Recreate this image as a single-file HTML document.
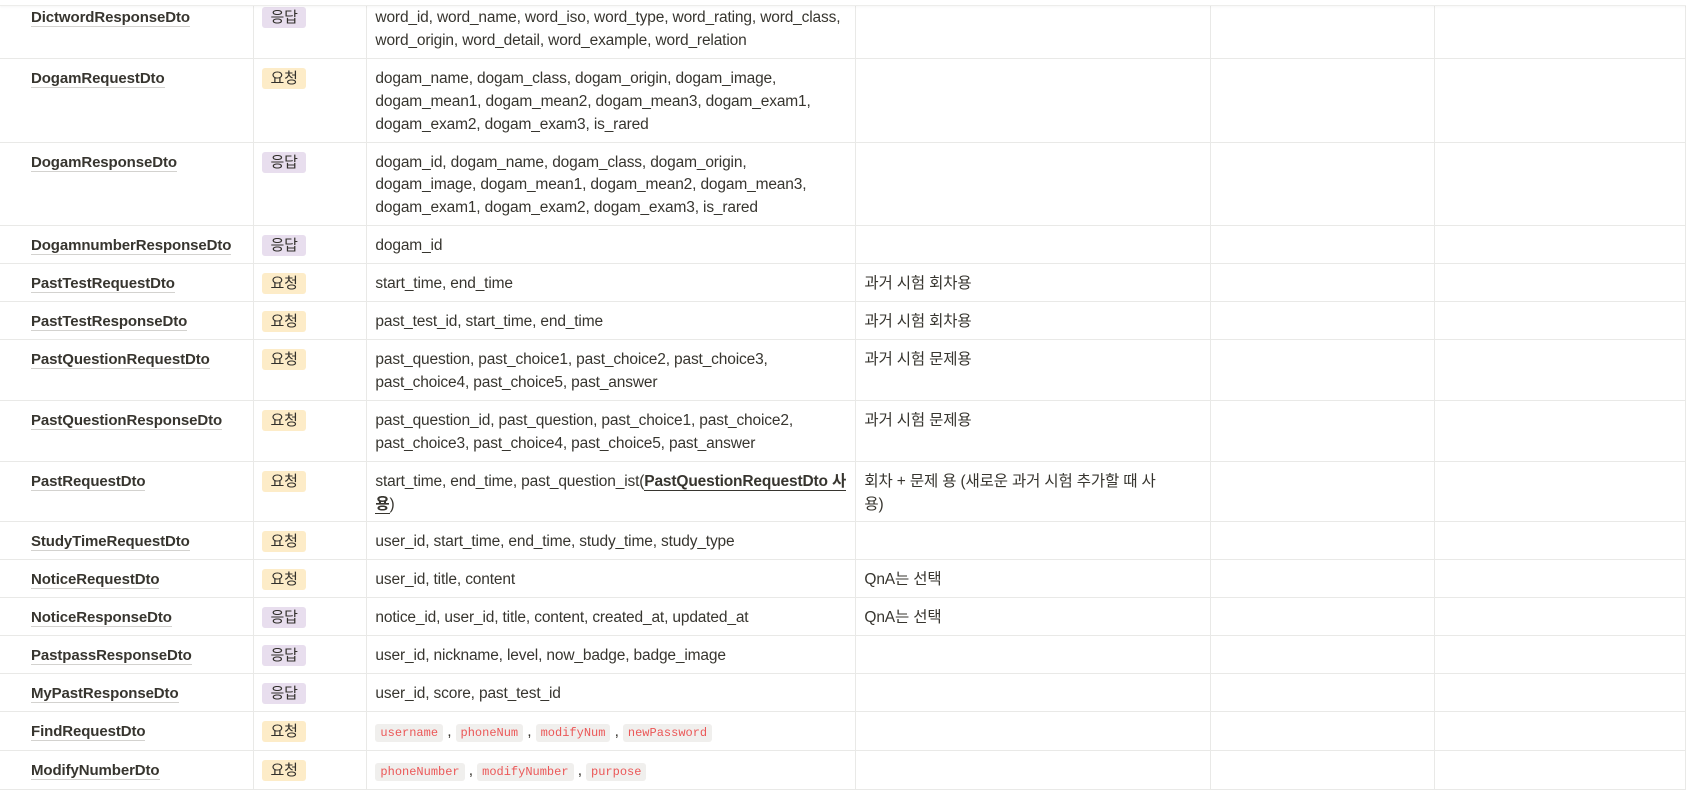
<!DOCTYPE html>
<html><head><meta charset="utf-8"><style>
body{margin:0;background:#fff;width:1686px;height:787px;overflow:hidden;font-family:"Liberation Sans","Noto Sans CJK KR",sans-serif;color:#37352f;font-size:15.5px;letter-spacing:-0.15px;position:relative}
table{position:absolute;left:0;top:-3px;border-collapse:collapse;table-layout:fixed}
td{border:1px solid #e9e9e7;vertical-align:top;padding:9px 8px 5px;line-height:22.9px;white-space:nowrap;overflow:hidden}
td:first-child{border-left:none;padding-left:31px}
.n{font-weight:bold;color:#37352f;font-size:15px;letter-spacing:-0.1px}
.n span{border-bottom:1px solid #d3d2cf}
.t{display:inline-block;padding:0 8px;border-radius:3px;line-height:21px;font-size:15px;color:#32302c;font-weight:normal}
.p{background:#e8deee}.o{background:#fdecc8}
code{font-family:"Liberation Mono",monospace;font-size:12px;color:#eb5757;background:#f0efed;border-radius:3px;padding:2px 5px;letter-spacing:0}
b{border-bottom:1px solid #37352f}
.top{position:absolute;left:0;top:0;width:1686px;height:5px;background:#fff;border-bottom:1px solid #ededeb;box-shadow:0 1px 2px rgba(0,0,0,.04);z-index:2}
</style></head><body>
<div class="top"></div>
<table>
<colgroup><col style="width:254px"><col style="width:113px"><col style="width:489px"><col style="width:355px"><col style="width:224px"><col style="width:251px"></colgroup>
<tr><td class="n"><span>DictwordResponseDto</span></td><td><span class="t p">응답</span></td><td>word_id, word_name, word_iso, word_type, word_rating, word_class,<br>word_origin, word_detail, word_example, word_relation</td><td></td><td></td><td></td></tr>
<tr><td class="n"><span>DogamRequestDto</span></td><td><span class="t o">요청</span></td><td>dogam_name, dogam_class, dogam_origin, dogam_image,<br>dogam_mean1, dogam_mean2, dogam_mean3, dogam_exam1,<br>dogam_exam2, dogam_exam3, is_rared</td><td></td><td></td><td></td></tr>
<tr><td class="n"><span>DogamResponseDto</span></td><td><span class="t p">응답</span></td><td>dogam_id, dogam_name, dogam_class, dogam_origin,<br>dogam_image, dogam_mean1, dogam_mean2, dogam_mean3,<br>dogam_exam1, dogam_exam2, dogam_exam3, is_rared</td><td></td><td></td><td></td></tr>
<tr><td class="n"><span>DogamnumberResponseDto</span></td><td><span class="t p">응답</span></td><td>dogam_id</td><td></td><td></td><td></td></tr>
<tr><td class="n"><span>PastTestRequestDto</span></td><td><span class="t o">요청</span></td><td>start_time, end_time</td><td>과거 시험 회차용</td><td></td><td></td></tr>
<tr><td class="n"><span>PastTestResponseDto</span></td><td><span class="t o">요청</span></td><td>past_test_id, start_time, end_time</td><td>과거 시험 회차용</td><td></td><td></td></tr>
<tr><td class="n"><span>PastQuestionRequestDto</span></td><td><span class="t o">요청</span></td><td>past_question, past_choice1, past_choice2, past_choice3,<br>past_choice4, past_choice5, past_answer</td><td>과거 시험 문제용</td><td></td><td></td></tr>
<tr><td class="n"><span>PastQuestionResponseDto</span></td><td><span class="t o">요청</span></td><td>past_question_id, past_question, past_choice1, past_choice2,<br>past_choice3, past_choice4, past_choice5, past_answer</td><td>과거 시험 문제용</td><td></td><td></td></tr>
<tr><td class="n"><span>PastRequestDto</span></td><td><span class="t o">요청</span></td><td>start_time, end_time, past_question_ist(<b>PastQuestionRequestDto 사</b><br><b>용</b>)</td><td>회차 + 문제 용 (새로운 과거 시험 추가할 때 사<br>용)</td><td></td><td></td></tr>
<tr><td class="n"><span>StudyTimeRequestDto</span></td><td><span class="t o">요청</span></td><td>user_id, start_time, end_time, study_time, study_type</td><td></td><td></td><td></td></tr>
<tr><td class="n"><span>NoticeRequestDto</span></td><td><span class="t o">요청</span></td><td>user_id, title, content</td><td>QnA는 선택</td><td></td><td></td></tr>
<tr><td class="n"><span>NoticeResponseDto</span></td><td><span class="t p">응답</span></td><td>notice_id, user_id, title, content, created_at, updated_at</td><td>QnA는 선택</td><td></td><td></td></tr>
<tr><td class="n"><span>PastpassResponseDto</span></td><td><span class="t p">응답</span></td><td>user_id, nickname, level, now_badge, badge_image</td><td></td><td></td><td></td></tr>
<tr><td class="n"><span>MyPastResponseDto</span></td><td><span class="t p">응답</span></td><td>user_id, score, past_test_id</td><td></td><td></td><td></td></tr>
<tr><td class="n"><span>FindRequestDto</span></td><td><span class="t o">요청</span></td><td><code>username</code> , <code>phoneNum</code> , <code>modifyNum</code> , <code>newPassword</code></td><td></td><td></td><td></td></tr>
<tr><td class="n"><span>ModifyNumberDto</span></td><td><span class="t o">요청</span></td><td><code>phoneNumber</code> , <code>modifyNumber</code> , <code>purpose</code></td><td></td><td></td><td></td></tr>
</table>
</body></html>
